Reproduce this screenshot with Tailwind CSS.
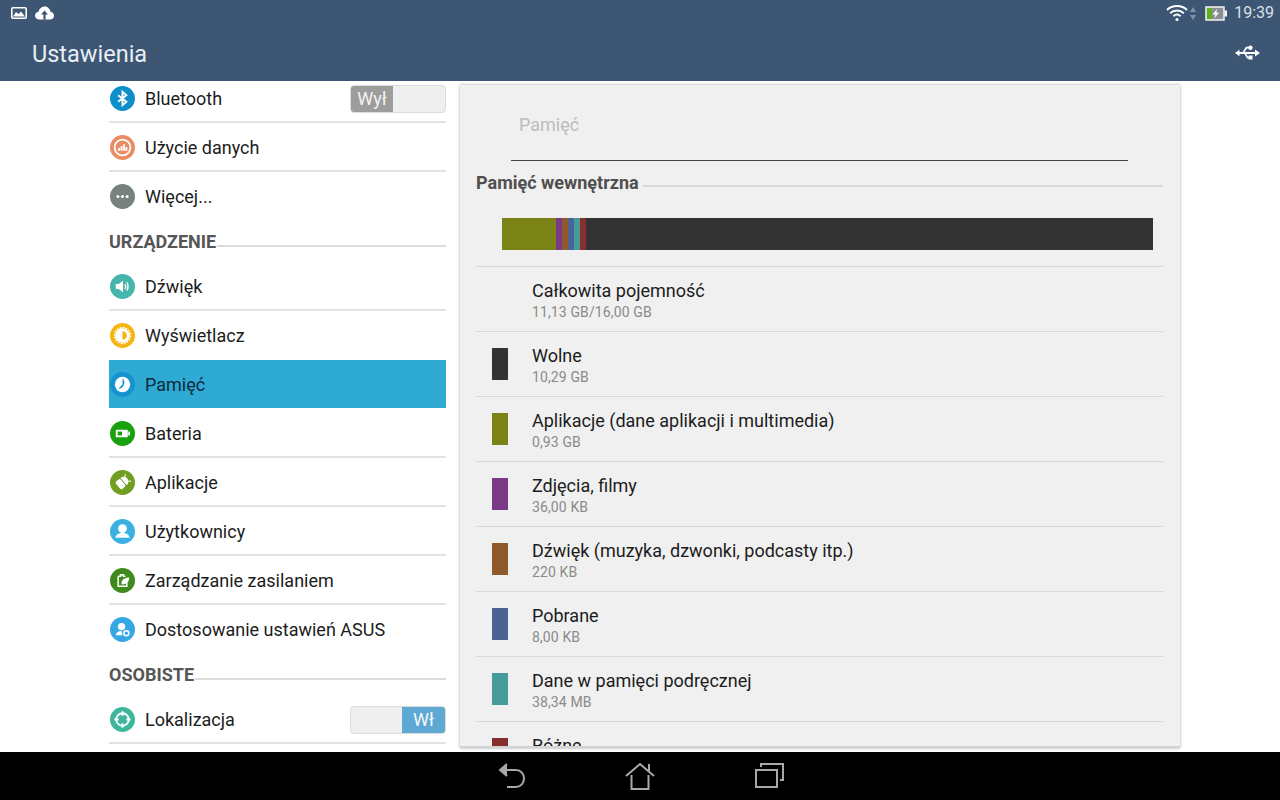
<!DOCTYPE html>
<html lang="pl">
<head>
  <meta charset="UTF-8" />
  <meta name="viewport" content="width=device-width, initial-scale=1.0"/>
  <title>Ustawienia</title>
  <script src="https://cdn.jsdelivr.net/npm/@tailwindcss/browser@4"></script>
</head>
<body class="bg-white font-['Roboto',sans-serif] w-[1280px] h-[800px] overflow-hidden flex flex-col">

  <!-- Status + action bar -->
  <header class="h-[81px] bg-[#3d5673] text-[#e8eef4] shrink-0">
    <div class="h-[26px] flex items-center pl-[11px] pr-[6px]">
      <svg class="w-[16px] h-[12px]" viewBox="0 0 16 12"><rect x="0.8" y="0.8" width="14.4" height="10.4" rx="1" fill="#3d5673" stroke="#fff" stroke-width="1.6"/><path d="M2 9.5 L5 5 L7.5 7 L10 4.5 L14 9.5Z" fill="#fff"/></svg>
      <svg class="w-[19px] h-[14px] ml-[8px]" viewBox="0 0 19 14"><path d="M4.5 13.5 C1.5 13.5 0 11.5 0 9.5 C0 7.5 1.5 6 3.5 5.8 C4.2 2.5 6.8 0.5 9.5 0.5 C12.5 0.5 15 2.5 15.5 5.8 C17.5 6 19 7.5 19 9.7 C19 11.8 17.3 13.5 15 13.5Z" fill="#fff"/><path d="M9.5 4.5 L13 8.5 H10.6 V13.5 H8.4 V8.5 H6Z" fill="#3d5673"/></svg>
      <div class="ml-auto flex items-center">
        <svg class="w-[22px] h-[18px]" viewBox="0 0 22 18" fill="none" stroke="#fff" stroke-width="2"><path d="M1 6 C6.5 0.8 15.5 0.8 21 6"/><path d="M4.2 9.2 C8 5.6 14 5.6 17.8 9.2"/><path d="M7.4 12.2 C9.6 10.2 12.4 10.2 14.6 12.2"/><circle cx="11" cy="15.5" r="1.6" fill="#fff" stroke="none"/></svg>
        <svg class="w-[6px] h-[13px] ml-[2px]" viewBox="0 0 6 13"><path d="M3 0 L6 5 H0Z M3 13 L0 8 H6Z" fill="#7f93a8"/></svg>
        <svg class="w-[22px] h-[15px] ml-[9px]" viewBox="0 0 22 15"><rect x="1" y="1" width="18" height="13" fill="#8a8f94" stroke="#f2f5f0" stroke-width="1.5"/><rect x="2" y="2" width="5" height="11" fill="#5fb01e"/><rect x="19.5" y="4.5" width="2.5" height="6" fill="#f2f5f0"/><path d="M12.5 2.500 L7.500 8.500 H10.500 L9 12.800 L14 6.500 H11Z" fill="#fff"/></svg>
        <span class="ml-[7px] text-[16px] leading-none text-[#d9e1e9]">19:39</span>
      </div>
    </div>
    <div class="h-[55px] flex items-center pl-[32px] pr-[20px]">
      <h1 class="text-[23.5px] leading-none font-normal pt-[2px]">Ustawienia</h1>
      <svg class="ml-auto w-[25px] h-[18px] -mt-[2px]" viewBox="0 0 25 18" fill="#fff"><path d="M0 9 L4.5 5.8 V12.2Z"/><rect x="3" y="8" width="18" height="2"/><path d="M25 9 L20 5.5 V12.5Z"/><path d="M7 9 L11 2.800 H14.500 V4.600 H12 L8.800 9Z"/><circle cx="15.500" cy="3.700" r="2.200"/><path d="M9 9 L12 14.500 H14.500 V12.800 H13 L10.800 9Z"/><rect x="13.500" y="11.500" width="4" height="4"/></svg>
    </div>
  </header>

  <main class="flex-1 min-h-0 flex overflow-hidden pl-[109px]">

    <!-- Settings list -->
    <nav class="w-[337px] shrink-0 -mt-[7px] text-[18px] text-[#1c1c1c]">
      <div class="h-[49px] pt-[2px] flex items-center border-b-2 border-[#e2e2e2]">
        <svg class="w-[25px] h-[25px] ml-[1px] shrink-0" viewBox="0 0 26 26"><circle cx="13" cy="13" r="13" fill="#0f8fca"/><path d="M8.500 9.500 L17 16.500 L13 20 V6 L17 9.500 L8.500 16.500" fill="none" stroke="#fff" stroke-width="2"/></svg>
        <span class="ml-[10px]">Bluetooth</span>
        <div class="ml-auto w-[96px] h-[28px] rounded-[4px] bg-[#efefef] border border-[#dcdcdc] overflow-hidden">
          <div class="w-[42px] h-full bg-[#9d9d9d] text-[#f4f4f4] flex items-center justify-center">Wył</div>
        </div>
      </div>
      <div class="h-[49px] pt-[2px] flex items-center border-b-2 border-[#e2e2e2]">
        <svg class="w-[25px] h-[25px] ml-[1px] shrink-0" viewBox="0 0 26 26"><circle cx="13" cy="13" r="13" fill="#ea8d65"/><circle cx="13" cy="13" r="8.200" fill="none" stroke="#fff" stroke-width="1.800"/><path d="M8.500 16.500 V13.500 H10.500 V16.500Z M11 16.500 V11.500 H13 V16.500Z M13.500 16.500 V9.500 H15.500 V16.500Z M16 16.500 V12.500 H18 V16.500Z" fill="#fff"/></svg>
        <span class="ml-[10px]">Użycie danych</span>
      </div>
      <div class="h-[49px] flex items-center">
        <svg class="w-[25px] h-[25px] ml-[1px] shrink-0" viewBox="0 0 26 26"><circle cx="13" cy="13" r="13" fill="#76827b"/><circle cx="8.200" cy="13" r="1.600" fill="#fff"/><circle cx="13" cy="13" r="1.600" fill="#fff"/><circle cx="17.800" cy="13" r="1.600" fill="#fff"/></svg>
        <span class="ml-[10px]">Więcej...</span>
      </div>

      <div class="h-[41px] flex items-center font-bold text-[#565656]">
        <span>URZĄDZENIE</span>
        <div class="flex-1 h-[2px] bg-[#dcdcdc] ml-[1px] mt-[9px]"></div>
      </div>

      <div class="h-[49px] pt-[2px] flex items-center border-b-2 border-[#e2e2e2]">
        <svg class="w-[25px] h-[25px] ml-[1px] shrink-0" viewBox="0 0 26 26"><circle cx="13" cy="13" r="13" fill="#46b6ad"/><path d="M6 10.500 H9 L13.500 7 V19 L9 15.500 H6Z" fill="#fff"/><path d="M15.500 10.500 Q17 13 15.500 15.500 M17.500 8.800 Q20 13 17.500 17.200" fill="none" stroke="#fff" stroke-width="1.500"/></svg>
        <span class="ml-[10px]">Dźwięk</span>
      </div>
      <div class="h-[49px] flex items-center">
        <svg class="w-[25px] h-[25px] ml-[1px] shrink-0" viewBox="0 0 26 26"><circle cx="13" cy="13" r="13" fill="#f5b510"/><circle cx="13" cy="13" r="7.500" fill="#fff"/><circle cx="13" cy="13" r="8.200" fill="none" stroke="#fff" stroke-width="1.600" stroke-dasharray="2 1.200"/><path d="M13 8.500 A4.500 4.500 0 0 1 13 17.500Z" fill="#f5b510"/></svg>
        <span class="ml-[10px]">Wyświetlacz</span>
      </div>
      <div class="h-[48px] mb-[1px] flex items-center bg-[#2eaad4] text-[#0f2a3a]">
        <svg class="w-[25px] h-[25px] ml-[1px] shrink-0" viewBox="0 0 26 26"><circle cx="13" cy="13" r="13" fill="#1593cf"/><circle cx="13" cy="13" r="8" fill="#fff"/><path d="M13 6.500 A6.500 6.500 0 0 1 8.400 17.600 L13 13Z" fill="#1593cf"/></svg>
        <span class="ml-[10px]">Pamięć</span>
      </div>
      <div class="h-[49px] pt-[2px] flex items-center border-b-2 border-[#e2e2e2]">
        <svg class="w-[25px] h-[25px] ml-[1px] shrink-0" viewBox="0 0 26 26"><circle cx="13" cy="13" r="13" fill="#18a00e"/><rect x="6" y="9" width="12.500" height="8" rx="1" fill="#fff"/><rect x="8" y="11" width="4.500" height="4" fill="#18a00e"/><rect x="19" y="11" width="1.800" height="4" fill="#fff"/></svg>
        <span class="ml-[10px]">Bateria</span>
      </div>
      <div class="h-[49px] pt-[2px] flex items-center border-b-2 border-[#e2e2e2]">
        <svg class="w-[25px] h-[25px] ml-[1px] shrink-0" viewBox="0 0 26 26"><circle cx="13" cy="13" r="13" fill="#6f9e20"/><g transform="rotate(50 13 13)"><path d="M8 11.500 A5 5 0 0 1 18 11.500Z" fill="#fff"/><path d="M10 7.500 L8.500 5.200 M16 7.500 L17.500 5.200" stroke="#fff" stroke-width="1.200"/><rect x="8" y="12.500" width="10" height="6.500" rx="1.500" fill="#fff"/></g></svg>
        <span class="ml-[10px]">Aplikacje</span>
      </div>
      <div class="h-[49px] pt-[2px] flex items-center border-b-2 border-[#e2e2e2]">
        <svg class="w-[25px] h-[25px] ml-[1px] shrink-0" viewBox="0 0 26 26"><circle cx="13" cy="13" r="13" fill="#3ab0e3"/><circle cx="13" cy="10" r="4.600" fill="#fff"/><path d="M5.500 19.500 C6.500 15.500 9.500 14.500 13 14.500 C16.500 14.500 19.500 15.500 20.500 19.500Z" fill="#fff"/></svg>
        <span class="ml-[10px]">Użytkownicy</span>
      </div>
      <div class="h-[49px] pt-[2px] flex items-center border-b-2 border-[#e2e2e2]">
        <svg class="w-[25px] h-[25px] ml-[1px] shrink-0" viewBox="0 0 26 26"><circle cx="13" cy="13" r="13" fill="#3f8a1b"/><path d="M8.500 8.500 H11 V7 H14 V8.500 H16 M8.500 8.500 V19 H17.500 V15" fill="none" stroke="#fff" stroke-width="1.600"/><path d="M12 17 C11.500 12.500 15 10 20 10 C20 14.500 17 17.500 12 17Z" fill="#fff"/></svg>
        <span class="ml-[10px]">Zarządzanie zasilaniem</span>
      </div>
      <div class="h-[49px] flex items-center">
        <svg class="w-[25px] h-[25px] ml-[1px] shrink-0" viewBox="0 0 26 26"><circle cx="13" cy="13" r="13" fill="#36a7e5"/><circle cx="12" cy="10" r="3.800" fill="#fff"/><path d="M6 19 C6.500 15.500 9 14.500 12 14.500 L13 19Z" fill="#fff"/><circle cx="17" cy="17" r="2.600" fill="none" stroke="#fff" stroke-width="1.600"/></svg>
        <span class="ml-[10px]">Dostosowanie ustawień ASUS</span>
      </div>

      <div class="h-[41px] flex items-center font-bold text-[#565656]">
        <span>OSOBISTE</span>
        <div class="flex-1 h-[2px] bg-[#dcdcdc] ml-[1px] mt-[9px]"></div>
      </div>

      <div class="h-[49px] pt-[2px] flex items-center border-b-2 border-[#e2e2e2]">
        <svg class="w-[25px] h-[25px] ml-[1px] shrink-0" viewBox="0 0 26 26"><circle cx="13" cy="13" r="13" fill="#3eb69d"/><circle cx="13" cy="13" r="6.500" fill="none" stroke="#fff" stroke-width="2"/><path d="M13 4.500 V9 M13 17 V21.500 M4.500 13 H9 M17 13 H21.500" stroke="#fff" stroke-width="2"/></svg>
        <span class="ml-[10px]">Lokalizacja</span>
        <div class="ml-auto w-[96px] h-[28px] rounded-[4px] bg-[#efefef] border border-[#dcdcdc] overflow-hidden flex justify-end">
          <div class="w-[43px] h-full bg-[#5ea9d4] text-[#f4f8fb] flex items-center justify-center">Wł</div>
        </div>
      </div>
    </nav>

    <!-- Storage panel -->
    <section class="w-[720px] h-[663px] ml-[14px] mt-[4px] bg-[#f0f0f0] border-b-2 border-[#d4d4d4] shadow-[0_0_3px_rgba(0,0,0,0.35)] overflow-hidden">
      <div class="h-[76px] ml-[51px] mr-[52px] border-b border-[#444] flex items-start pl-[8px] pt-[28px]">
        <span class="text-[18px] leading-[24px] text-[#bcbcbc]">Pamięć</span>
      </div>
      <div class="pl-[16px] pr-[17px]">
        <div class="h-[42px] pt-[1px] flex items-center font-bold text-[18px] text-[#4f4f4f]">
          <span>Pamięć wewnętrzna</span>
          <div class="flex-1 h-[2px] bg-[#d8d8d8] ml-[4px] mt-[7px]"></div>
        </div>
        <div class="mt-[15px] ml-[26px] mr-[10px] h-[32px] flex">
          <div class="w-[54px] bg-[#7a8416]"></div>
          <div class="w-[6px] bg-[#7b3a85]"></div>
          <div class="w-[6px] bg-[#8f5a2b]"></div>
          <div class="w-[6px] bg-[#4a6294]"></div>
          <div class="w-[6px] bg-[#459a9a]"></div>
          <div class="w-[6px] bg-[#83302f]"></div>
          <div class="flex-1 bg-[#333333]"></div>
        </div>
        <div class="mt-[16px] border-t border-[#d8d8d8]">
          <div class="h-[65px] flex border-b border-[#d8d8d8]">
            <div class="ml-[56px] pt-[12px]">
              <p class="text-[18px] leading-[24px] text-[#1c1c1c]">Całkowita pojemność</p>
              <p class="text-[14px] leading-[18px] tracking-[0.12px] text-[#8a8a8a]">11,13 GB/16,00 GB</p>
            </div>
          </div>
          <div class="h-[65px] flex border-b border-[#d8d8d8]">
            <div class="w-[16px] h-[32px] ml-[16px] mt-[16px] bg-[#333333]"></div>
            <div class="ml-[24px] pt-[12px]">
              <p class="text-[18px] leading-[24px] text-[#1c1c1c]">Wolne</p>
              <p class="text-[14px] leading-[18px] tracking-[0.12px] text-[#8a8a8a]">10,29 GB</p>
            </div>
          </div>
          <div class="h-[65px] flex border-b border-[#d8d8d8]">
            <div class="w-[16px] h-[32px] ml-[16px] mt-[16px] bg-[#7a8416]"></div>
            <div class="ml-[24px] pt-[12px]">
              <p class="text-[18px] leading-[24px] text-[#1c1c1c]">Aplikacje (dane aplikacji i multimedia)</p>
              <p class="text-[14px] leading-[18px] tracking-[0.12px] text-[#8a8a8a]">0,93 GB</p>
            </div>
          </div>
          <div class="h-[65px] flex border-b border-[#d8d8d8]">
            <div class="w-[16px] h-[32px] ml-[16px] mt-[16px] bg-[#7b3a85]"></div>
            <div class="ml-[24px] pt-[12px]">
              <p class="text-[18px] leading-[24px] text-[#1c1c1c]">Zdjęcia, filmy</p>
              <p class="text-[14px] leading-[18px] tracking-[0.12px] text-[#8a8a8a]">36,00 KB</p>
            </div>
          </div>
          <div class="h-[65px] flex border-b border-[#d8d8d8]">
            <div class="w-[16px] h-[32px] ml-[16px] mt-[16px] bg-[#8f5a2b]"></div>
            <div class="ml-[24px] pt-[12px]">
              <p class="text-[18px] leading-[24px] text-[#1c1c1c]">Dźwięk (muzyka, dzwonki, podcasty itp.)</p>
              <p class="text-[14px] leading-[18px] tracking-[0.12px] text-[#8a8a8a]">220 KB</p>
            </div>
          </div>
          <div class="h-[65px] flex border-b border-[#d8d8d8]">
            <div class="w-[16px] h-[32px] ml-[16px] mt-[16px] bg-[#4a6294]"></div>
            <div class="ml-[24px] pt-[12px]">
              <p class="text-[18px] leading-[24px] text-[#1c1c1c]">Pobrane</p>
              <p class="text-[14px] leading-[18px] tracking-[0.12px] text-[#8a8a8a]">8,00 KB</p>
            </div>
          </div>
          <div class="h-[65px] flex border-b border-[#d8d8d8]">
            <div class="w-[16px] h-[32px] ml-[16px] mt-[16px] bg-[#459a9a]"></div>
            <div class="ml-[24px] pt-[12px]">
              <p class="text-[18px] leading-[24px] text-[#1c1c1c]">Dane w pamięci podręcznej</p>
              <p class="text-[14px] leading-[18px] tracking-[0.12px] text-[#8a8a8a]">38,34 MB</p>
            </div>
          </div>
          <div class="h-[65px] flex">
            <div class="w-[16px] h-[32px] ml-[16px] mt-[16px] bg-[#83302f]"></div>
            <div class="ml-[24px] pt-[12px]">
              <p class="text-[18px] leading-[24px] text-[#1c1c1c]">Różne</p>
            </div>
          </div>
        </div>
      </div>
    </section>
  </main>

  <!-- Navigation bar -->
  <footer class="h-[48px] bg-black shrink-0 flex items-center pl-[498px] pb-[1px]">
    <svg class="w-[28px] h-[28px]" viewBox="0 0 28 28" fill="none" stroke="#a8a8a8" stroke-width="2"><path d="M9 2 L2 8 L9 14" fill="#a8a8a8"/><path d="M4 8 H18 C23 8 26 12 26 16.500 C26 21 23 25 18 25 H9"/></svg>
    <svg class="w-[30px] h-[28px] ml-[99px]" viewBox="0 0 30 28" fill="none" stroke="#a8a8a8" stroke-width="2"><path d="M1 14 L15 2 L29 14"/><path d="M24 9 V2"/><path d="M6.500 13 V27 H23.500 V13"/></svg>
    <svg class="w-[29px] h-[25px] ml-[100px]" viewBox="0 0 29 25" fill="none" stroke="#a8a8a8" stroke-width="2"><rect x="1" y="7" width="21" height="17"/><path d="M6 4 V1 H28 V17 H25"/></svg>
  </footer>
</body>
</html>
